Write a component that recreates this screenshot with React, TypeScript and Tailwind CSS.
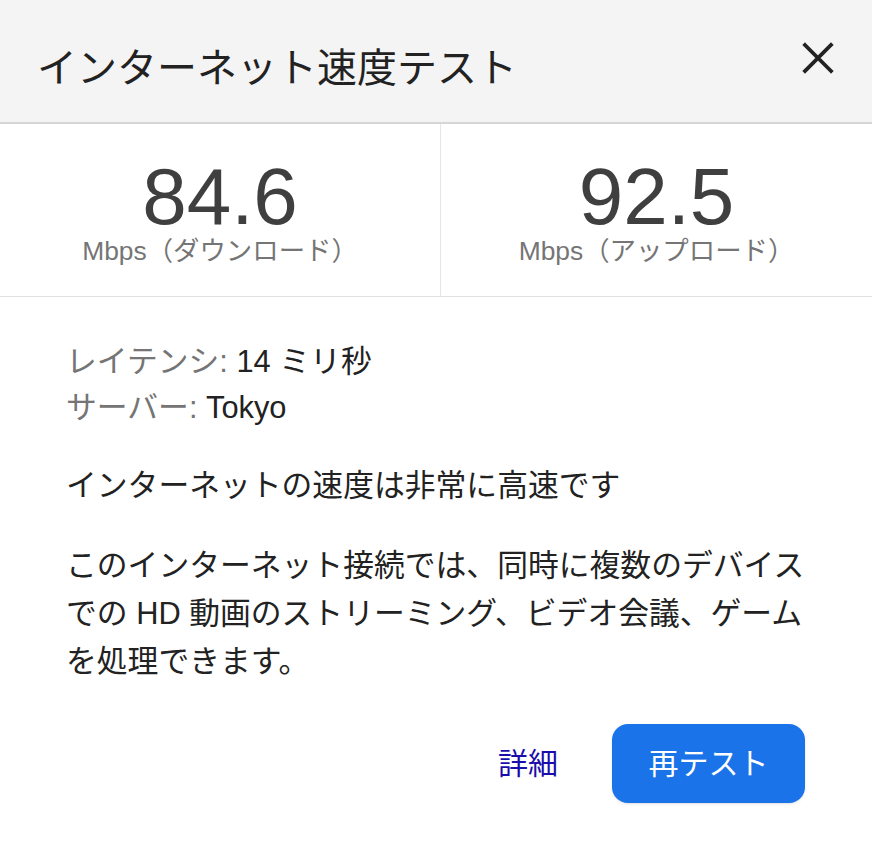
import React from 'react';

const font = { fontFamily: '"Liberation Sans", "Noto Sans CJK JP", sans-serif' };

const Stat = ({ value, label }: { value: string; label: string }) => (
  <div className="flex flex-col items-center pt-[35px]">
    <div className="text-[80px] leading-[76px] text-[#3f3f3f]">{value}</div>
    <div className="text-[26.4px] leading-8 text-[#757575]">{label}</div>
  </div>
);

export default function App() {
  return (
    <div className="w-[872px] h-[844px] bg-white" style={font}>
      {/* header */}
      <div className="h-[124px] bg-[#f4f4f4] border-b-2 border-[#d6d6d6] flex items-center justify-between pl-[37px] pr-[34px]">
        <h1 className="text-[40px] leading-none text-[#222] pt-[14px]">インターネット速度テスト</h1>
        <button className="w-10 h-10 flex items-center justify-center -mt-[6px]">
          <svg width="32" height="32" viewBox="0 0 32 32" fill="none" stroke="#222" strokeWidth="3.8" strokeLinecap="square">
            <path d="M3 3L29 29M29 3L3 29" />
          </svg>
        </button>
      </div>

      {/* speeds */}
      <div className="h-[173px] grid grid-cols-[441px_1fr] border-b border-[#e2e2e2]">
        <div className="border-r border-[#e6e6e6]">
          <Stat value="84.6" label="Mbps（ダウンロード）" />
        </div>
        <Stat value="92.5" label="Mbps（アップロード）" />
      </div>

      {/* details */}
      <div className="pl-[66px] pr-[67px] pt-[42px] text-[30.8px] text-[#222]">
        <div className="leading-[46px]">
          <div>
            <span className="text-[#757575]">レイテンシ: </span>14 ミリ秒
          </div>
          <div>
            <span className="text-[#757575]">サーバー: </span>Tokyo
          </div>
        </div>
        <p className="mt-[31px] leading-[48px]">インターネットの速度は非常に高速です</p>
        <p className="mt-[32px] leading-[48px]">
          このインターネット接続では、同時に複数のデバイス
          <br />
          での HD 動画のストリーミング、ビデオ会議、ゲーム
          <br />
          を処理できます。
        </p>
        <div className="mt-[38px] flex items-center justify-end gap-[54px]">
          <button className="text-[30px] text-[#1a0dab]">詳細</button>
          <button className="h-[79px] w-[193px] rounded-2xl bg-[#1a73e8] text-white text-[30px] shadow-sm">再テスト</button>
        </div>
      </div>
    </div>
  );
}
